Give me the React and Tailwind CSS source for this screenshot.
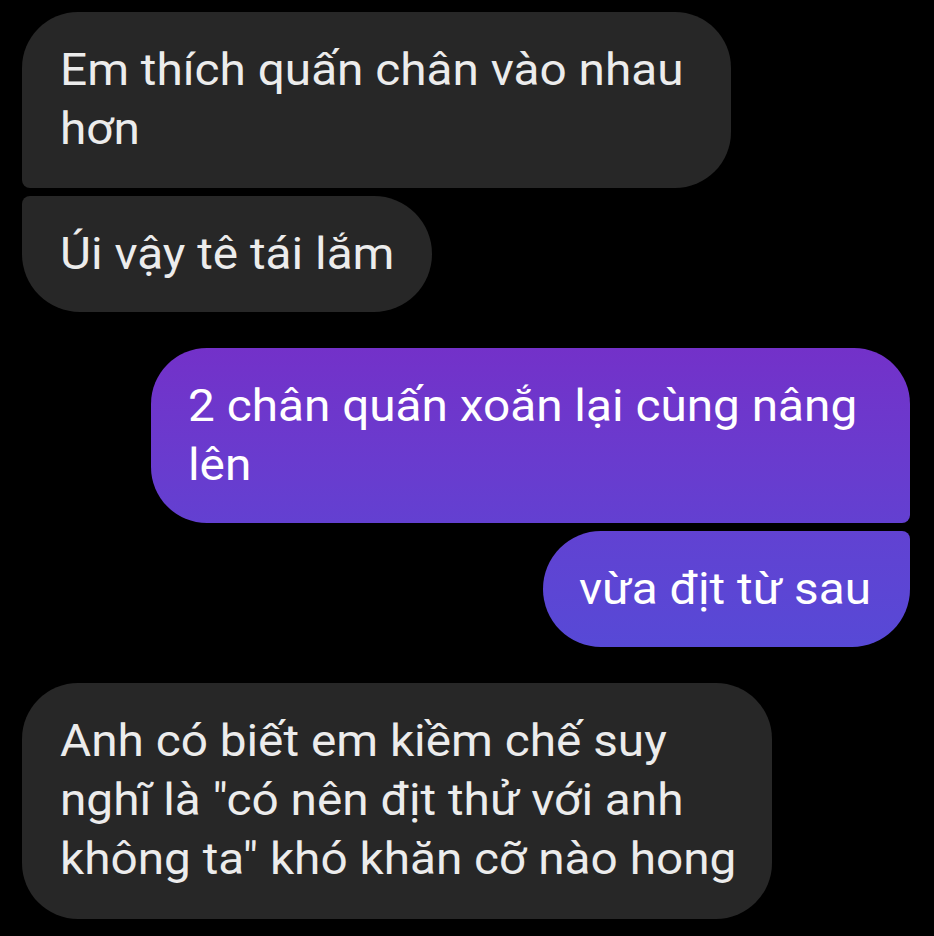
export default function App() {
  const font = { fontFamily: "Roboto, 'Noto Sans', sans-serif" };
  const txt = "origin-left scale-x-[1.085] whitespace-nowrap";
  return (
    <div className="w-[934px] h-[936px] bg-black overflow-hidden pt-[12px]" style={font}>
      <div className="flex flex-col">
        <div className="ml-[22px] w-[709px] h-[176px] bg-[#272727] text-[#ececec] text-[44px] leading-[59px] pl-[38px] pt-[29px] rounded-tl-[56px] rounded-tr-[56px] rounded-br-[56px] rounded-bl-[8px]">
          <div className={txt}>Em thích quấn chân vào nhau<br />hơn</div>
        </div>
        <div className="mt-[8px] ml-[22px] w-[410px] h-[116px] bg-[#272727] text-[#ececec] text-[44px] leading-[59px] pl-[38px] pt-[29px] rounded-tl-[8px] rounded-bl-[58px] rounded-r-[58px]">
          <div className={txt}>Úi vậy tê tái lắm</div>
        </div>
        <div className="mt-[36px] ml-[151px] w-[759px] h-[175px] bg-gradient-to-b from-[#7331c9] to-[#6340d1] text-white text-[44px] leading-[59px] pl-[37px] pt-[29px] rounded-tl-[56px] rounded-tr-[56px] rounded-bl-[56px] rounded-br-[8px]">
          <div className={txt}>2 chân quấn xoắn lại cùng nâng<br />lên</div>
        </div>
        <div className="mt-[8px] ml-[543px] w-[367px] h-[116px] bg-gradient-to-b from-[#6142d2] to-[#5749d6] text-white text-[44px] leading-[59px] pl-[36px] pt-[29px] rounded-tr-[8px] rounded-br-[58px] rounded-l-[58px]">
          <div className={txt}>vừa địt từ sau</div>
        </div>
        <div className="mt-[36px] ml-[22px] w-[750px] h-[236px] bg-[#272727] text-[#ececec] text-[44px] leading-[59px] pl-[38px] pt-[29px] rounded-[56px]">
          <div className={txt}>
            Anh có biết em kiềm chế suy<br />nghĩ là "có nên địt thử với anh<br />không ta" khó khăn cỡ nào hong
          </div>
        </div>
      </div>
    </div>
  );
}
